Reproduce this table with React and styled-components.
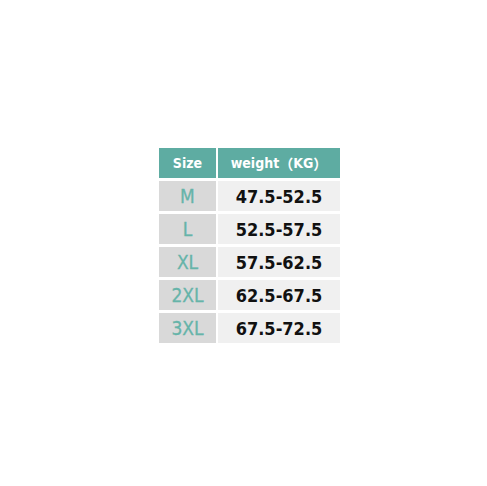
import styled, { createGlobalStyle } from "styled-components";

const GlobalStyle = createGlobalStyle`
    body {
        margin: 0;
        background: #ffffff;
    }
`;

const rows = [
    { size: "M", weight: "47.5-52.5" },
    { size: "L", weight: "52.5-57.5" },
    { size: "XL", weight: "57.5-62.5" },
    { size: "2XL", weight: "62.5-67.5" },
    { size: "3XL", weight: "67.5-72.5" },
];

function App() {
    return (
        <>
            <GlobalStyle />
            <StyledPage>
                <StyledTable>
                    <StyledHead>Size</StyledHead>
                    <StyledHead>
                        weight<StyledParen>（</StyledParen>KG<StyledParen>）</StyledParen>
                    </StyledHead>
                    {rows.map((row) => (
                        <StyledRow key={row.size}>
                            <StyledSize>{row.size}</StyledSize>
                            <StyledWeight>{row.weight}</StyledWeight>
                        </StyledRow>
                    ))}
                </StyledTable>
            </StyledPage>
        </>
    );
}

const StyledPage = styled.div`
    width: 487px;
    height: 486px;
    padding: 148px 0 0 159px;
    box-sizing: border-box;
`;
const StyledTable = styled.div`
    display: grid;
    grid-template-columns: 57px 122px;
    grid-auto-rows: 30px;
    column-gap: 2px;
    row-gap: 3px;
    width: 181px;
`;
const StyledRow = styled.div`
    display: contents;
`;
const StyledHead = styled.div`
    background: #5eaca2;
    color: #ffffff;
    display: flex;
    align-items: center;
    justify-content: center;
    font-family: "DejaVu Sans Condensed", "DejaVu Sans", sans-serif;
    font-weight: 700;
    font-size: 14px;
`;
const StyledParen = styled.span`
    font-family: "Noto Sans CJK SC", sans-serif;
    font-weight: 700;
`;
const StyledSize = styled.div`
    background: #d9d9d9;
    color: #66b4a9;
    display: flex;
    align-items: center;
    justify-content: center;
    font-family: "DejaVu Sans Condensed", "DejaVu Sans", sans-serif;
    font-size: 19px;
    -webkit-text-stroke: 0.3px #66b4a9;
`;
const StyledWeight = styled.div`
    background: #f0f0f0;
    color: #111111;
    display: flex;
    align-items: center;
    justify-content: center;
    font-family: "DejaVu Sans Condensed", "DejaVu Sans", sans-serif;
    font-weight: 700;
    font-size: 18px;
`;

export default App;
